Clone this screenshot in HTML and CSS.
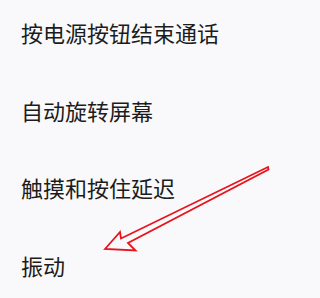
FILE: index.html
```html
<!DOCTYPE html>
<html lang="zh">
<head>
<meta charset="utf-8">
<link rel="stylesheet" href="styles.css">
</head>
<body>
<div class="screen">
  <ul class="menu">
    <li class="item">按电源按钮结束通话</li>
    <li class="item">自动旋转屏幕</li>
    <li class="item">触摸和按住延迟</li>
    <li class="item">振动</li>
  </ul>
  <svg class="arrow" width="281" height="298" viewBox="0 0 281 298">
    <polygon points="105,249 120,232 121,238.5 268,167 268.5,169.5 128,243 135.5,250.5" fill="none" stroke="#e8131b" stroke-width="1.8" stroke-linejoin="miter"/>
  </svg>
</div>
</body>
</html>
```
FILE: styles.css
```css
html, body {
  margin: 0;
  padding: 0;
  background: #f9f9fb;
}
.screen {
  position: relative;
  width: 281px;
  height: 298px;
  overflow: hidden;
  background: #f9f9fb;
}
.menu {
  list-style: none;
  margin: 0;
  padding: 21px 0 0 21px;
  display: flex;
  flex-direction: column;
  gap: 55.5px;
}
.item {
  font-family: "Noto Sans CJK SC", "Noto Sans", sans-serif;
  font-size: 22px;
  line-height: 22px;
  color: #1c1c1c;
  white-space: nowrap;
}
.arrow {
  position: absolute;
  left: 0;
  top: 0;
}
```
